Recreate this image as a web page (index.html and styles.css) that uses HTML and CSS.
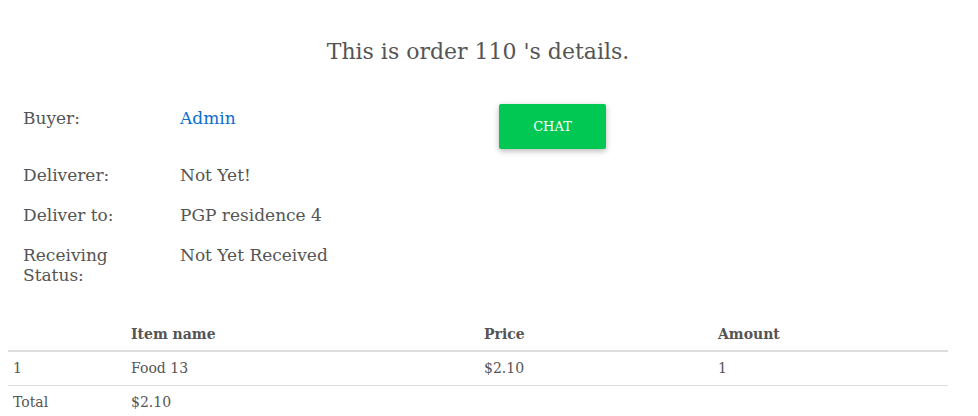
FILE: index.html
```html
<!DOCTYPE html>
<html>
<head>
<meta charset="utf-8">
<link rel="stylesheet" href="styles.css">
</head>
<body>
<div class="container">
  <h2 class="title">This is order 110 's details.</h2>
  <div class="info">
    <div class="row first">
      <div class="label">Buyer:</div>
      <div class="value"><a class="link" href="#">Admin</a></div>
      <div class="action"><button class="chat">CHAT</button></div>
    </div>
    <div class="row">
      <div class="label">Deliverer:</div>
      <div class="value">Not Yet!</div>
    </div>
    <div class="row">
      <div class="label">Deliver to:</div>
      <div class="value">PGP residence 4</div>
    </div>
    <div class="row">
      <div class="label">Receiving Status:</div>
      <div class="value">Not Yet Received</div>
    </div>
  </div>
  <table class="items">
    <colgroup>
      <col class="c1"><col class="c2"><col class="c3"><col class="c4">
    </colgroup>
    <thead>
      <tr><th></th><th>Item name</th><th>Price</th><th>Amount</th></tr>
    </thead>
    <tbody>
      <tr><td>1</td><td>Food 13</td><td>$2.10</td><td>1</td></tr>
      <tr><td>Total</td><td>$2.10</td><td></td><td></td></tr>
    </tbody>
  </table>
</div>
</body>
</html>
```
FILE: styles.css
```css
html, body { margin: 0; padding: 0; background: #fff; }
body {
  font-family: "DejaVu Serif", "Liberation Serif", serif;
  color: #555;
  padding: 0 8px;
}
.container { width: 940px; }
.title {
  margin: 0;
  padding-top: 38px;
  height: 104px;
  box-sizing: border-box;
  text-align: center;
  font-size: 22px;
  font-weight: normal;
  line-height: 28px;
}
.info { padding: 0 15px; }
.row {
  display: grid;
  grid-template-columns: 157px 319px 150px;
  margin-bottom: 20px;
  font-size: 17px;
  line-height: 20px;
}
.row.first { margin-bottom: 16px; }
.row:last-child { margin-bottom: 0; }
.row.first .label, .row.first .value { padding-top: 4px; }
.label { width: 100px; }
.link { color: #0a6ed1; text-decoration: none; }
.chat {
  display: block;
  width: 107px;
  height: 45px;
  border: none;
  border-radius: 2px;
  background: #00c853;
  color: #fff;
  font-family: "DejaVu Serif", serif;
  font-size: 13px;
  box-shadow: 0 2px 5px rgba(0,0,0,0.18), 0 2px 8px rgba(0,0,0,0.12);
}
.items {
  margin-top: 32px;
  width: 940px;
  border-collapse: collapse;
  font-size: 14px;
  line-height: 18px;
}
.c1 { width: 118px; }
.c2 { width: 353px; }
.c3 { width: 234px; }
.c4 { width: 235px; }
.items th, .items td {
  text-align: left;
  vertical-align: top;
}
.items th {
  padding: 8px 5px 7px;
  font-weight: bold;
  border-bottom: 2px solid #ddd;
}
.items td {
  padding: 7px 5px 8px;
  border-top: 1px solid #ddd;
}
.items tbody tr:first-child td { border-top: none; }
```
